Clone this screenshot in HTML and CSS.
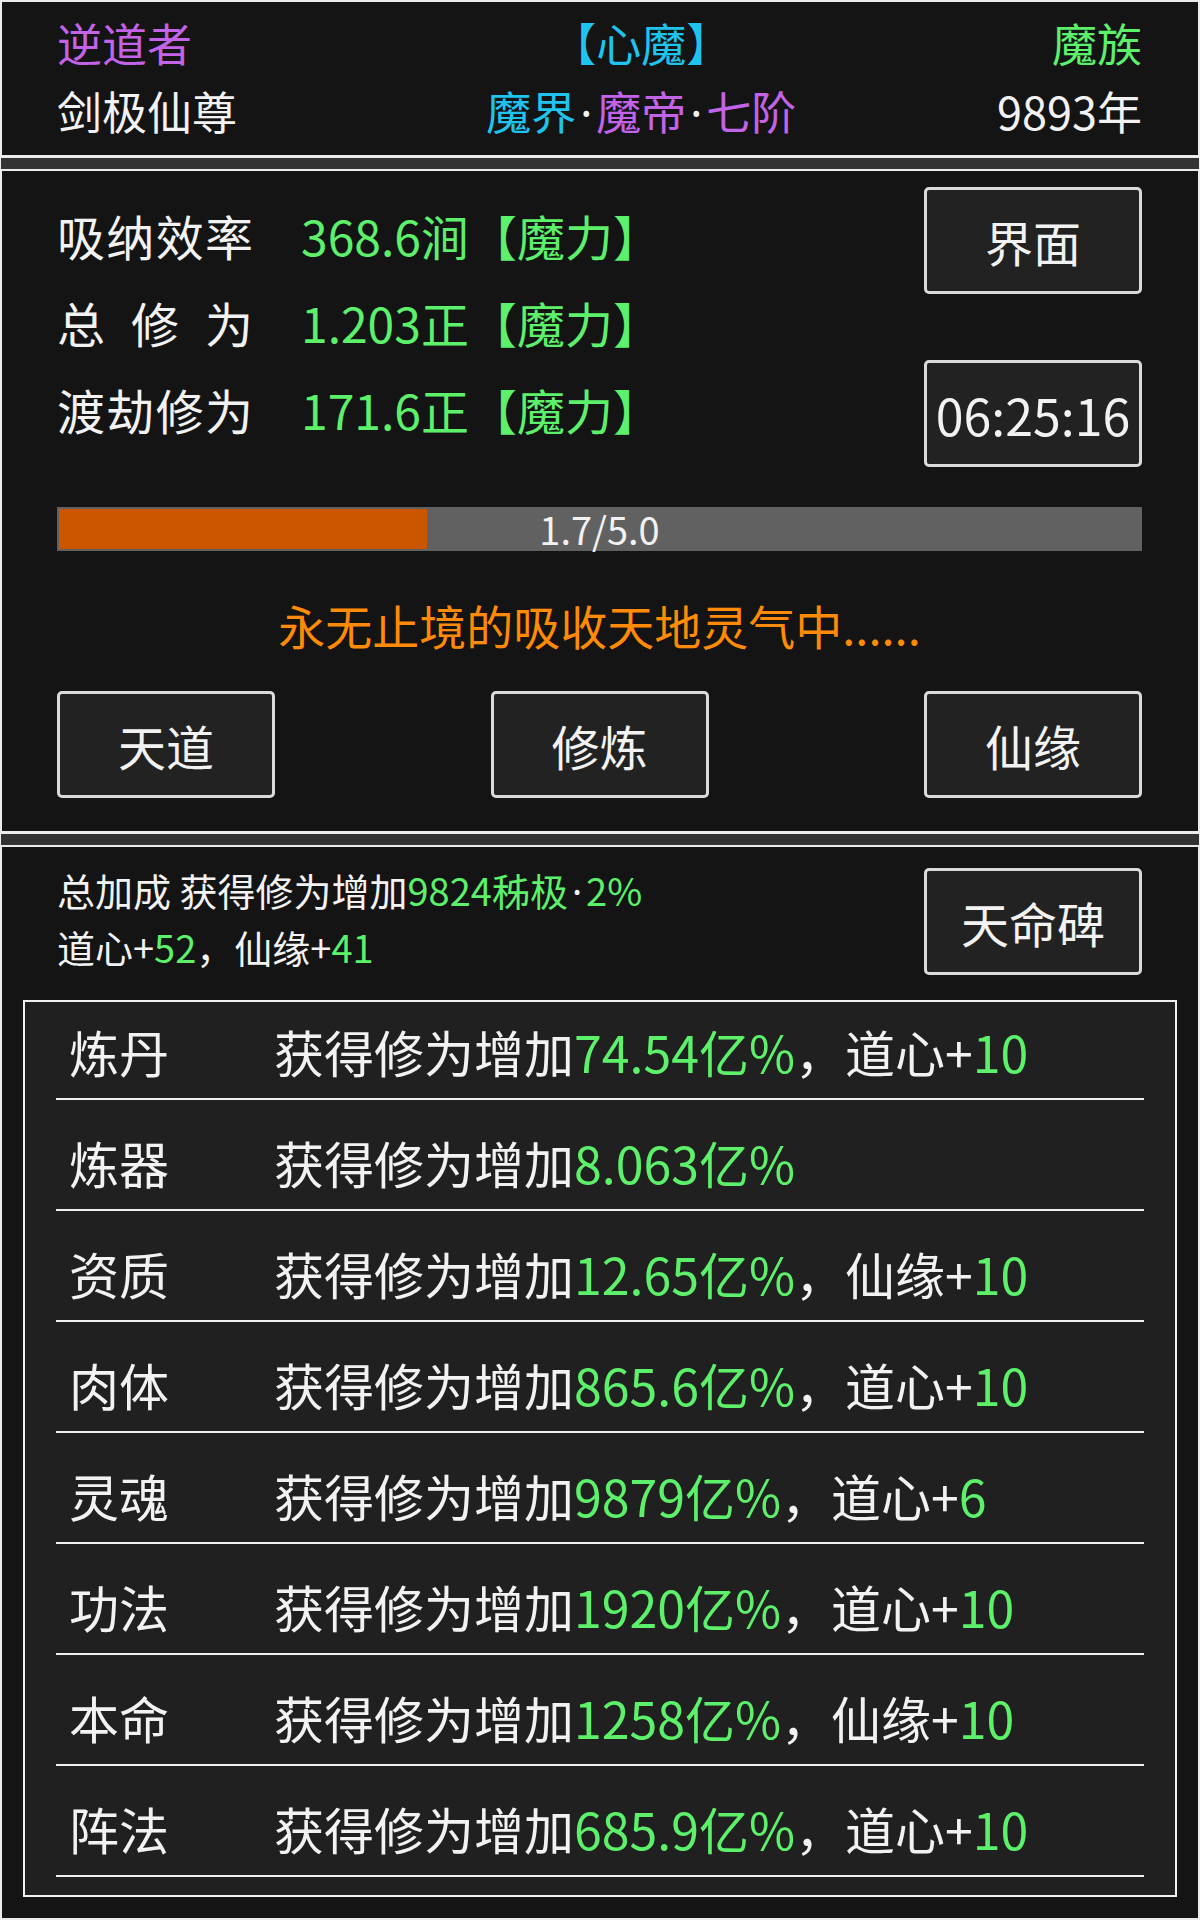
FILE: index.html
```html
<!DOCTYPE HTML>
<html lang="zh-CN">
    <head>
        <meta charset="UTF-8">
        <title>修炼</title>
        <meta name="viewport" content="width=device-width, initial-scale=1.0"/>

        <link rel="stylesheet" href="styles.css">

    </head>

    <body>
        <div class="panel header">
            <div class="col">
                <span class="purple">逆道者</span>
                <span>剑极仙尊</span>
            </div>
            <div class="col center">
                <span class="cyan">【心魔】</span>
                <span><span class="cyan">魔界</span><span class="dot">·</span><span class="purple">魔帝</span><span class="dot">·</span><span class="purple">七阶</span></span>
            </div>
            <div class="col right">
                <span class="green">魔族</span>
                <span>9893年</span>
            </div>
        </div>

        <div class="sep"></div>

        <div class="panel main">
            <div class="flex top">
                <div class="stats">
                    <div class="stat-row">
                        <span class="stat-label">吸纳效率</span>
                        <span class="green">368.6涧【魔力】</span>
                    </div>
                    <div class="stat-row">
                        <span class="stat-label">总修为</span>
                        <span class="green">1.203正【魔力】</span>
                    </div>
                    <div class="stat-row">
                        <span class="stat-label">渡劫修为</span>
                        <span class="green">171.6正【魔力】</span>
                    </div>
                </div>
                <div class="side">
                    <button class="button" type="button">界面</button>
                    <button class="button clock" type="button">06:25:16</button>
                </div>
            </div>

            <div class="bar">
                <div class="bar-fill" style="width: 34%"></div>
                <span class="bar-text">1.7/5.0</span>
            </div>

            <div class="status">永无止境的吸收天地灵气中......</div>

            <div class="flex actions">
                <button class="button" type="button">天道</button>
                <button class="button" type="button">修炼</button>
                <button class="button" type="button">仙缘</button>
            </div>
        </div>

        <div class="sep"></div>

        <div class="panel bonus">
            <div class="flex top bonus-top">
                <div class="bonus-text">
                    <div>总加成 获得修为增加<span class="green">9824秭极<span class="dot">·</span>2%</span></div>
                    <div>道心+<span class="green">52</span>，仙缘+<span class="green">41</span></div>
                </div>
                <button class="button" type="button">天命碑</button>
            </div>

            <div class="list">
                <div class="list-row">
                    <span class="list-name">炼丹</span>
                    <span>获得修为增加<span class="green">74.54亿%</span>，道心+<span class="green">10</span></span>
                </div>
                <div class="list-row">
                    <span class="list-name">炼器</span>
                    <span>获得修为增加<span class="green">8.063亿%</span></span>
                </div>
                <div class="list-row">
                    <span class="list-name">资质</span>
                    <span>获得修为增加<span class="green">12.65亿%</span>，仙缘+<span class="green">10</span></span>
                </div>
                <div class="list-row">
                    <span class="list-name">肉体</span>
                    <span>获得修为增加<span class="green">865.6亿%</span>，道心+<span class="green">10</span></span>
                </div>
                <div class="list-row">
                    <span class="list-name">灵魂</span>
                    <span>获得修为增加<span class="green">9879亿%</span>，道心+<span class="green">6</span></span>
                </div>
                <div class="list-row">
                    <span class="list-name">功法</span>
                    <span>获得修为增加<span class="green">1920亿%</span>，道心+<span class="green">10</span></span>
                </div>
                <div class="list-row">
                    <span class="list-name">本命</span>
                    <span>获得修为增加<span class="green">1258亿%</span>，仙缘+<span class="green">10</span></span>
                </div>
                <div class="list-row">
                    <span class="list-name">阵法</span>
                    <span>获得修为增加<span class="green">685.9亿%</span>，道心+<span class="green">10</span></span>
                </div>
            </div>
        </div>
    </body>
</html>
```

FILE: styles.css
```css
* {
    box-sizing: border-box;
}
html {
    background: #ececec;
}
body {
    margin: 0;
    padding: 2px;
    width: 1200px;
    min-height: 1920px;
    display: flex;
    flex-direction: column;
    background: #ececec;
    color: #f2f2f2;
    font-family: "Noto Sans CJK SC", "Noto Sans", sans-serif;
}
span {
    margin: 0;
    padding: 0;
}

.flex {
    display: flex;
}
.green {
    color: #5df06b;
}
.purple {
    color: #c263e8;
}
.cyan {
    color: #1ec4ee;
}
.dot {
    font-family: "Noto Sans", sans-serif;
    color: #f2f2f2;
    padding: 0 4px;
}

.panel {
    background: #141414;
}
.sep {
    height: 11px;
    margin: 3px -1px 2px -1px;
    background: #333333;
}

/*HEADER*/
.header {
    display: grid;
    grid-template-columns: 1.25fr 1fr 1fr;
    padding: 7px 56px 8px 55px;
    font-size: 45px;
    line-height: 68px;
    white-space: nowrap;
}
.col {
    display: flex;
    flex-direction: column;
}
.center {
    text-align: center;
}
.right {
    text-align: right;
}
/*HEADER*/

/*MAIN*/
.main {
    padding: 16px 56px 33px 55px;
}
.top {
    justify-content: space-between;
    align-items: flex-start;
}
.stats {
    padding-top: 5px;
    font-size: 48px;
}
.stat-row {
    display: flex;
    height: 87px;
    line-height: 87px;
}
.stat-label {
    width: 196px;
    margin-right: 48px;
    text-align: justify;
    text-align-last: justify;
}
.side {
    display: flex;
    flex-direction: column;
    gap: 66px;
}
.button {
    width: 218px;
    height: 107px;
    padding: 0;
    border: 3px solid #dadada;
    border-radius: 5px;
    background: #222222;
    color: #f2f2f2;
    font-family: inherit;
    font-size: 48px;
    line-height: 1;
    cursor: pointer;
}
.clock {
    font-size: 50px;
}
.bar {
    position: relative;
    height: 44px;
    margin-top: 40px;
    padding: 2px;
    background: #616161;
}
.bar-fill {
    height: 100%;
    background: #cc5500;
}
.bar-text {
    position: absolute;
    left: 0;
    right: 0;
    top: 0;
    text-align: center;
    font-size: 38px;
    line-height: 44px;
}
.status {
    margin-top: 44px;
    text-align: center;
    color: #ff8a05;
    font-size: 47px;
    line-height: 60px;
}
.actions {
    margin-top: 36px;
    justify-content: space-between;
}
/*MAIN*/

/*BONUS*/
.bonus {
    flex: 1;
    padding: 21px;
}
.bonus-top {
    margin: 0 35px 0 34px;
    height: 110px;
}
.bonus-text {
    margin-top: -6px;
    font-size: 38px;
    line-height: 55px;
}
.list {
    margin-top: 22px;
    padding: 0 31px 18px 31px;
    border: 2px solid #f0f0f0;
    background: #202020;
}
.list-row {
    display: flex;
    padding: 34px 0 19px 13px;
    border-bottom: 2px solid #f0f0f0;
    font-size: 50px;
    line-height: 56px;
}
.list-row:first-child {
    padding-top: 21px;
}
.list-name {
    width: 205px;
}
/*BONUS*/
```
